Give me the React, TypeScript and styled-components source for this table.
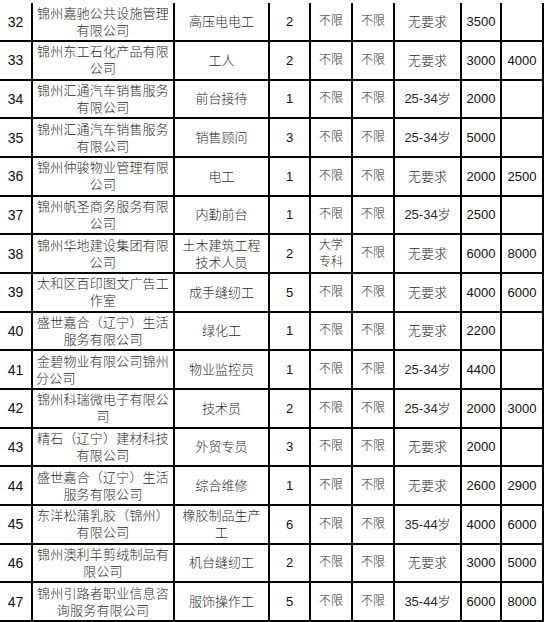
import React from 'react';
import styled, { createGlobalStyle } from 'styled-components';

type Line = { text: string; left?: boolean };

interface Job {
  no: number;
  company: Line[];
  post: string[];
  count: number;
  edu: string[];
  gender: string;
  age: string;
  payMin: string;
  payMax: string;
}

const l = (...texts: string[]): Line[] => texts.map(text => ({ text }));

const JOBS: Job[] = [
  { no: 32, company: l('锦州嘉驰公共设施管理', '有限公司'), post: ['高压电电工'], count: 2, edu: ['不限'], gender: '不限', age: '无要求', payMin: '3500', payMax: '' },
  { no: 33, company: l('锦州东工石化产品有限', '公司'), post: ['工人'], count: 2, edu: ['不限'], gender: '不限', age: '无要求', payMin: '3000', payMax: '4000' },
  { no: 34, company: l('锦州汇通汽车销售服务', '有限公司'), post: ['前台接待'], count: 1, edu: ['不限'], gender: '不限', age: '25-34岁', payMin: '2000', payMax: '' },
  { no: 35, company: l('锦州汇通汽车销售服务', '有限公司'), post: ['销售顾问'], count: 3, edu: ['不限'], gender: '不限', age: '25-34岁', payMin: '5000', payMax: '' },
  { no: 36, company: l('锦州仲骏物业管理有限', '公司'), post: ['电工'], count: 1, edu: ['不限'], gender: '不限', age: '无要求', payMin: '2000', payMax: '2500' },
  { no: 37, company: l('锦州帆圣商务服务有限', '公司'), post: ['内勤前台'], count: 1, edu: ['不限'], gender: '不限', age: '25-34岁', payMin: '2500', payMax: '' },
  { no: 38, company: l('锦州华地建设集团有限', '公司'), post: ['土木建筑工程', '技术人员'], count: 2, edu: ['大学', '专科'], gender: '不限', age: '无要求', payMin: '6000', payMax: '8000' },
  { no: 39, company: l('太和区百印图文广告工', '作室'), post: ['成手缝纫工'], count: 5, edu: ['不限'], gender: '不限', age: '无要求', payMin: '4000', payMax: '6000' },
  { no: 40, company: l('盛世嘉合（辽宁）生活', '服务有限公司'), post: ['绿化工'], count: 1, edu: ['不限'], gender: '不限', age: '无要求', payMin: '2200', payMax: '' },
  { no: 41, company: [{ text: '金碧物业有限公司锦州' }, { text: '分公司', left: true }], post: ['物业监控员'], count: 1, edu: ['不限'], gender: '不限', age: '25-34岁', payMin: '4400', payMax: '' },
  { no: 42, company: l('锦州科瑞微电子有限公', '司'), post: ['技术员'], count: 2, edu: ['不限'], gender: '不限', age: '25-34岁', payMin: '2000', payMax: '3000' },
  { no: 43, company: l('精石（辽宁）建材科技', '有限公司'), post: ['外贸专员'], count: 3, edu: ['不限'], gender: '不限', age: '无要求', payMin: '2000', payMax: '' },
  { no: 44, company: l('盛世嘉合（辽宁）生活', '服务有限公司'), post: ['综合维修'], count: 1, edu: ['不限'], gender: '不限', age: '无要求', payMin: '2600', payMax: '2900' },
  { no: 45, company: l('东洋松蒲乳胶（锦州）', '有限公司'), post: ['橡胶制品生产', '工'], count: 6, edu: ['不限'], gender: '不限', age: '35-44岁', payMin: '4000', payMax: '6000' },
  { no: 46, company: l('锦州澳利羊剪绒制品有', '限公司'), post: ['机台缝纫工'], count: 2, edu: ['不限'], gender: '不限', age: '无要求', payMin: '3000', payMax: '5000' },
  { no: 47, company: l('锦州引路者职业信息咨', '询服务有限公司'), post: ['服饰操作工'], count: 5, edu: ['不限'], gender: '不限', age: '35-44岁', payMin: '6000', payMax: '8000' },
];

const App = () => {
  return (
    <Wrapper>
      <GlobalStyle />
      <Sheet>
        {JOBS.map(job => (
          <React.Fragment key={job.no}>
            <Cell>
              <Seq>{job.no}</Seq>
            </Cell>
            <Cell $stack>
              {job.company.map((line, i) => (
                <CompanyLine key={i} $left={line.left}>
                  {line.text}
                </CompanyLine>
              ))}
            </Cell>
            <Cell $stack>
              {job.post.map((line, i) => (
                <Wide key={i}>{line}</Wide>
              ))}
            </Cell>
            <Cell>
              <Num>{job.count}</Num>
            </Cell>
            <Cell $stack>
              {job.edu.map((line, i) => (
                <Narrow key={i}>{line}</Narrow>
              ))}
            </Cell>
            <Cell>
              <Narrow>{job.gender}</Narrow>
            </Cell>
            <Cell>
              <Wide>{job.age}</Wide>
            </Cell>
            <Cell>
              <Num>{job.payMin}</Num>
            </Cell>
            <Cell>
              <Num>{job.payMax}</Num>
            </Cell>
          </React.Fragment>
        ))}
      </Sheet>
    </Wrapper>
  );
};

export default App;

const GlobalStyle = createGlobalStyle`
  html, body {
    margin: 0;
    padding: 0;
    background: #ffffff;
  }
  body {
    font-family: "Liberation Sans", "Noto Sans CJK SC", sans-serif;
    color: #111;
    overflow: hidden;
  }
`;

const Wrapper = styled.div`
  width: 545px;
  height: 622px;
  padding-top: 3.33px;
  box-sizing: border-box;
  overflow: hidden;
`;

const Sheet = styled.div`
  display: grid;
  grid-template-columns: 33px 142px 95px 41px 42px 42px 67px 40px 42px;
  grid-auto-rows: 38.667px;
`;

const Cell = styled.div<{ $stack?: boolean }>`
  box-sizing: border-box;
  border-right: 2px solid #000;
  border-bottom: 2px solid #000;
  display: flex;
  flex-direction: ${p => (p.$stack ? 'column' : 'row')};
  align-items: ${p => (p.$stack ? 'stretch' : 'center')};
  justify-content: center;
  text-align: center;
  overflow: hidden;
`;

const Seq = styled.span`
  font-size: 14px;
`;

const Num = styled.span`
  font-size: 13px;
`;

const CjkText = styled.span`
  display: block;
  font-size: 13px;
  font-weight: 300;
  color: #2b2b2b;
  line-height: 17px;
  white-space: nowrap;
  text-align: center;
`;

const CompanyLine = styled(CjkText)<{ $left?: boolean }>`
  letter-spacing: 0.2px;
  text-align: ${p => (p.$left ? 'left' : 'center')};
  padding-left: ${p => (p.$left ? '3px' : '0')};
`;

const Wide = styled(CjkText)``;

const Narrow = styled(CjkText)`
  font-size: 12px;
`;
